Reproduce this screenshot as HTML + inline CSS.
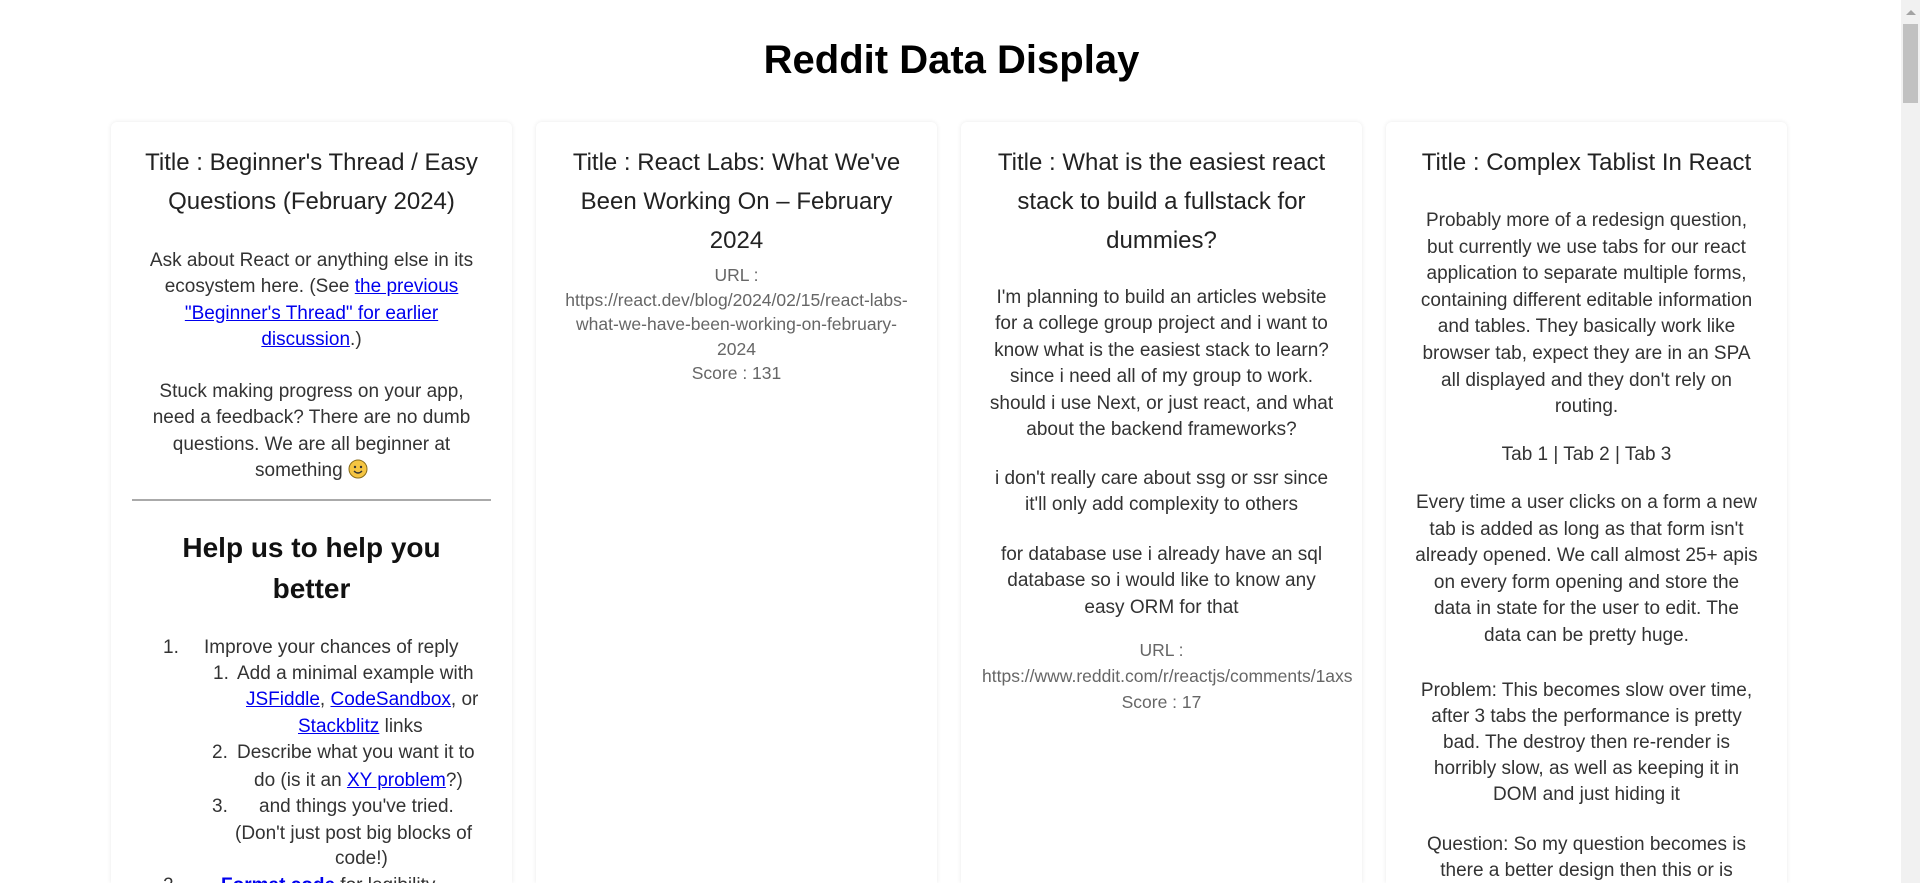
<!DOCTYPE html>
<html><head><meta charset="utf-8"><style>
*{margin:0;padding:0;box-sizing:border-box}
html{width:1920px;height:883px;overflow:hidden}
body{width:1920px;height:883px;overflow:hidden;background:#fff;position:relative;font-family:"Liberation Sans",Arial,sans-serif}
h1{position:absolute;left:0;width:1903px;top:35px;text-align:center;font-size:40px;font-weight:bold;color:#000;line-height:50px}
.card{position:absolute;top:122px;width:401px;height:761px;background:#fff;border-radius:6px 6px 0 0;box-shadow:0 0 5px rgba(0,0,0,0.09)}
.b{position:absolute;left:0;width:401px;text-align:center;white-space:nowrap}
.t{font-size:24px;line-height:39px;color:#222}
.p{font-size:19px;line-height:26.4px;color:#333}
.u{font-size:17.5px;line-height:24.5px;color:#666}
a{color:#0000ee;text-decoration:underline}
.l{position:absolute;white-space:nowrap;font-size:19px;line-height:26.4px;color:#333}
.sb{position:absolute;right:0;top:0;width:19px;height:883px;background:#f1f1f1}
.th{position:absolute;left:2px;top:24px;width:15px;height:79px;background:#c1c1c1}
</style></head><body>
<h1>Reddit Data Display</h1>

<div class="card" style="left:111px">
 <div class="b t" style="top:21px">Title : Beginner's Thread / Easy<br>Questions (February 2024)</div>
 <div class="b p" style="top:126px">Ask about React or anything else in its<br>ecosystem here. (See <a>the previous</a><br><a>"Beginner's Thread" for earlier</a><br><a>discussion</a>.)</div>
 <div class="b p" style="top:257px">Stuck making progress on your app,<br>need a feedback? There are no dumb<br>questions. We are all beginner at<br>something <svg width="20" height="20" viewBox="0 0 20 20" style="vertical-align:-3px"><circle cx="10" cy="10" r="9" fill="#f5c542" stroke="#8a6d1a" stroke-width="1"/><circle cx="7" cy="8" r="1.2" fill="#333"/><circle cx="13" cy="8" r="1.2" fill="#333"/><path d="M6 12q4 4 8 0" stroke="#333" stroke-width="1.3" fill="none"/></svg></div>
 <div style="position:absolute;left:21px;top:377px;width:359px;height:2px;background:#aaa"></div>
 <div class="b" style="top:405px;font-size:28px;font-weight:bold;line-height:41px;color:#111">Help us to help you<br>better</div>
</div>
<div class="l" style="left:163px;top:635px">1.</div>
<div class="l" style="left:204px;top:635px">Improve your chances of reply</div>
<div class="l" style="left:213px;top:661px">1.</div>
<div class="l" style="left:237px;top:661px">Add a minimal example with</div>
<div class="l" style="left:246px;top:687px"><a>JSFiddle</a>, <a>CodeSandbox</a>, or</div>
<div class="l" style="left:298px;top:714px"><a>Stackblitz</a> links</div>
<div class="l" style="left:212px;top:740px">2.</div>
<div class="l" style="left:237px;top:740px">Describe what you want it to</div>
<div class="l" style="left:254px;top:768px">do (is it an <a>XY problem</a>?)</div>
<div class="l" style="left:212px;top:794px">3.</div>
<div class="l" style="left:259px;top:794px">and things you've tried.</div>
<div class="l" style="left:235px;top:821px">(Don't just post big blocks of</div>
<div class="l" style="left:335px;top:846px">code!)</div>
<div class="l" style="left:163px;top:873px">2.</div>
<div class="l" style="left:221px;top:873px"><a><b>Format code</b></a> for legibility.</div>

<div class="card" style="left:536px">
 <div class="b t" style="top:21px">Title : React Labs: What We've<br>Been Working On – February<br>2024</div>
 <div class="b u" style="top:141px">URL :<br>https://react.dev/blog/2024/02/15/react-labs-<br>what-we-have-been-working-on-february-<br>2024<br>Score : 131</div>
</div>

<div class="card" style="left:961px">
 <div class="b t" style="top:21px">Title : What is the easiest react<br>stack to build a fullstack for<br>dummies?</div>
 <div class="b p" style="top:163px">I'm planning to build an articles website<br>for a college group project and i want to<br>know what is the easiest stack to learn?<br>since i need all of my group to work.<br>should i use Next, or just react, and what<br>about the backend frameworks?</div>
 <div class="b p" style="top:344px">i don't really care about ssg or ssr since<br>it'll only add complexity to others</div>
 <div class="b p" style="top:420px">for database use i already have an sql<br>database so i would like to know any<br>easy ORM for that</div>
 <div class="b u" style="top:516px">URL :</div>
 <div class="u" style="position:absolute;left:21px;top:542px;white-space:nowrap">https://www.reddit.com/r/reactjs/comments/1axs</div>
 <div class="b u" style="top:568px">Score : 17</div>
</div>

<div class="card" style="left:1386px">
 <div class="b t" style="top:21px">Title : Complex Tablist In React</div>
 <div class="b p" style="top:86px;line-height:26.6px">Probably more of a redesign question,<br>but currently we use tabs for our react<br>application to separate multiple forms,<br>containing different editable information<br>and tables. They basically work like<br>browser tab, expect they are in an SPA<br>all displayed and they don't rely on<br>routing.</div>
 <div class="b p" style="top:320px">Tab 1 | Tab 2 | Tab 3</div>
 <div class="b p" style="top:368px;line-height:26.6px">Every time a user clicks on a form a new<br>tab is added as long as that form isn't<br>already opened. We call almost 25+ apis<br>on every form opening and store the<br>data in state for the user to edit. The<br>data can be pretty huge.</div>
 <div class="b p" style="top:556px;line-height:26.1px">Problem: This becomes slow over time,<br>after 3 tabs the performance is pretty<br>bad. The destroy then re-render is<br>horribly slow, as well as keeping it in<br>DOM and just hiding it</div>
 <div class="b p" style="top:710px">Question: So my question becomes is<br>there a better design then this or is</div>
</div>

<div class="sb"><div style="position:absolute;left:5px;top:10px;width:0;height:0;border-left:5px solid transparent;border-right:5px solid transparent;border-bottom:5px solid #a3a3a3"></div><div class="th"></div></div>
</body></html>
